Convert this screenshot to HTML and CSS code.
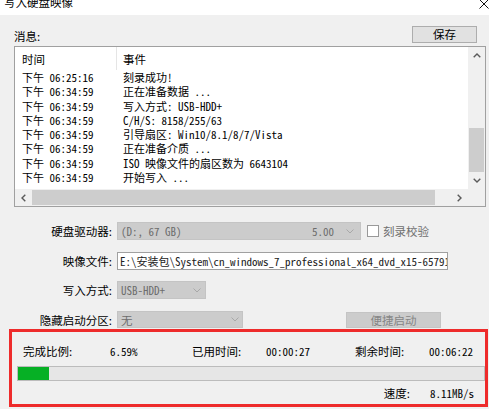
FILE: index.html
```html
<!DOCTYPE html>
<html lang="zh-CN">
<head>
<meta charset="utf-8">
<title>写入硬盘映像</title>
<link rel="stylesheet" href="styles.css">
</head>
<body>
<div class="titlebar">
  <div class="title">写入硬盘映像</div>
  <svg class="close" width="10" height="10" viewBox="0 0 10 10"><path d="M0.5 0.5 L9.5 9.5 M9.5 0.5 L0.5 9.5" stroke="#111" stroke-width="1" fill="none"/></svg>
</div>

<div class="msg-head">
  <div class="msg-label">消息:</div>
  <div class="btn-save">保存</div>
</div>

<div class="listbox">
  <div class="list-content">
    <div class="list-header">
      <div class="h1">时间</div>
      <div class="h2">事件</div>
    </div>
    <div class="row"><div class="c1">下午 06:25:16</div><div class="c2">刻录成功!</div></div>
    <div class="row"><div class="c1">下午 06:34:59</div><div class="c2">正在准备数据 ...</div></div>
    <div class="row"><div class="c1">下午 06:34:59</div><div class="c2">写入方式: USB-HDD+</div></div>
    <div class="row"><div class="c1">下午 06:34:59</div><div class="c2">C/H/S: 8158/255/63</div></div>
    <div class="row"><div class="c1">下午 06:34:59</div><div class="c2">引导扇区: Win10/8.1/8/7/Vista</div></div>
    <div class="row"><div class="c1">下午 06:34:59</div><div class="c2">正在准备介质 ...</div></div>
    <div class="row"><div class="c1">下午 06:34:59</div><div class="c2">ISO 映像文件的扇区数为 6643104</div></div>
    <div class="row"><div class="c1">下午 06:34:59</div><div class="c2">开始写入 ...</div></div>
  </div>
  <div class="vscroll">
    <div class="sbtn"><svg width="8" height="5" viewBox="0 0 8 5"><polyline points="0.7,4.3 4,1 7.3,4.3" stroke="#5a5a5a" stroke-width="1.4" fill="none"/></svg></div>
    <div class="vtrack"><div class="vthumb"></div></div>
    <div class="sbtn"><svg width="8" height="5" viewBox="0 0 8 5"><polyline points="0.7,0.7 4,4 7.3,0.7" stroke="#5a5a5a" stroke-width="1.4" fill="none"/></svg></div>
  </div>
  <div class="hscroll">
    <div class="sbtn"><svg width="5" height="8" viewBox="0 0 5 8"><polyline points="4.3,0.7 1,4 4.3,7.3" stroke="#5a5a5a" stroke-width="1.4" fill="none"/></svg></div>
    <div class="htrack"><div class="hthumb"></div></div>
    <div class="sbtn"><svg width="5" height="8" viewBox="0 0 5 8"><polyline points="0.7,0.7 4,4 0.7,7.3" stroke="#5a5a5a" stroke-width="1.4" fill="none"/></svg></div>
  </div>
  <div class="corner"></div>
</div>

<div class="form">
  <div class="frow">
    <div class="flabel">硬盘驱动器:</div>
    <div class="sel sel-drive">
      <span class="sel-text">(D:, 67 GB)</span>
      <span class="sel-extra">5.00</span>
      <svg class="chev" width="8" height="5" viewBox="0 0 8 5"><polyline points="0.5,0.5 4,4 7.5,0.5" stroke="#a8a8a8" stroke-width="1" fill="none"/></svg>
    </div>
    <div class="check"></div>
    <div class="check-label">刻录校验</div>
  </div>
  <div class="frow">
    <div class="flabel">映像文件:</div>
    <div class="input">E:\安装包\System\cn_windows_7_professional_x64_dvd_x15-65791.iso</div>
  </div>
  <div class="frow">
    <div class="flabel">写入方式:</div>
    <div class="sel sel-mode">
      <span class="sel-text">USB-HDD+</span>
      <svg class="chev" width="8" height="5" viewBox="0 0 8 5"><polyline points="0.5,0.5 4,4 7.5,0.5" stroke="#a8a8a8" stroke-width="1" fill="none"/></svg>
    </div>
  </div>
  <div class="frow">
    <div class="flabel">隐藏启动分区:</div>
    <div class="sel sel-hide">
      <span class="sel-text cjk">无</span>
      <svg class="chev" width="8" height="5" viewBox="0 0 8 5"><polyline points="0.5,0.5 4,4 7.5,0.5" stroke="#a8a8a8" stroke-width="1" fill="none"/></svg>
    </div>
    <div class="btn-quick">便捷启动</div>
  </div>
</div>

<div class="stats">
  <div>完成比例:</div>
  <div class="m">6.59%</div>
  <div>已用时间:</div>
  <div class="m">00:00:27</div>
  <div>剩余时间:</div>
  <div class="m">00:06:22</div>
</div>
<div class="bar"><div class="fill" style="width:6.59%"></div></div>
<div class="speed">
  <div>速度:</div>
  <div class="m">8.11MB/s</div>
</div>

<div class="annot"></div>
</body>
</html>
```

FILE: styles.css
```css
html, body {
  margin: 0;
  padding: 0;
}
body {
  width: 489px;
  height: 409px;
  overflow: hidden;
  position: relative;
  background: #f0f0f0;
  color: #000;
  font-family: "Noto Sans CJK SC", "Microsoft YaHei", sans-serif;
  font-size: 11.5px;
}

.titlebar {
  height: 15px;
  background: #fff;
  display: flex;
  justify-content: space-between;
  overflow: hidden;
}
.title {
  margin: -5px 0 0 4px;
  line-height: 14px;
  font-size: 11.5px;
}
.close {
  margin: -1px 0 0 0;
}

.msg-head {
  display: flex;
  justify-content: space-between;
  align-items: flex-end;
  margin: 11px 12px 3px 14px;
}
.msg-label {
  line-height: 14px;
}
.btn-save {
  width: 65px;
  height: 17px;
  box-sizing: border-box;
  border: 1px solid #adadad;
  background: #e1e1e1;
  text-align: center;
  line-height: 15px;
}

.listbox {
  margin: 0 3px 0 14px;
  height: 161px;
  box-sizing: border-box;
  border: 1px solid #a0a0a0;
  background: #fff;
  display: grid;
  grid-template-columns: 1fr 17px;
  grid-template-rows: 1fr 17px;
}
.list-content {
  overflow: hidden;
  font-family: "Noto Sans Mono CJK SC", "Noto Sans CJK SC", monospace;
  font-size: 11px;
}
.list-header {
  height: 23px;
  display: flex;
  align-items: stretch;
  font-family: "Noto Sans CJK SC", sans-serif;
  font-size: 11.5px;
}
.h1 {
  width: 102px;
  box-sizing: border-box;
  padding-left: 7px;
  border-right: 1px solid #e5e5e5;
  display: flex;
  align-items: center;
}
.h2 {
  padding-left: 6px;
  display: flex;
  align-items: center;
}
.row {
  display: flex;
  height: 14.3px;
  line-height: 14.3px;
  white-space: nowrap;
}
.c1 {
  width: 101px;
  box-sizing: border-box;
  padding-left: 7px;
}
.c2 {
  padding-left: 7px;
}

.vscroll {
  background: #f0f0f0;
  display: flex;
  flex-direction: column;
}
.sbtn {
  width: 17px;
  height: 17px;
  flex: none;
  display: flex;
  align-items: center;
  justify-content: center;
}
.vtrack {
  flex: 1;
  display: flex;
  flex-direction: column;
  justify-content: flex-end;
}
.vthumb {
  height: 44px;
  margin: 0 1px;
  background: #cdcdcd;
}
.hscroll {
  background: #f0f0f0;
  display: flex;
}
.htrack {
  flex: 1;
  display: flex;
}
.hthumb {
  width: 403px;
  margin: 1px 0;
  background: #cdcdcd;
}
.corner {
  background: #f0f0f0;
}

.form {
  margin-top: 15px;
  display: flex;
  flex-direction: column;
  gap: 11.5px;
}
.frow {
  display: flex;
  align-items: center;
  height: 18px;
}
.flabel {
  width: 112px;
  margin-right: 5px;
  text-align: right;
  line-height: 14px;
}
.sel {
  box-sizing: border-box;
  height: 18px;
  background: #cccccc;
  border: 1px solid #c4c4c4;
  display: flex;
  align-items: center;
  padding: 0 5px 0 3px;
  color: #6d6d6d;
  font-family: "Noto Sans Mono CJK SC", "Noto Sans CJK SC", monospace;
  font-size: 11px;
  line-height: 14px;
}
.sel-text {
  flex: 1;
  white-space: nowrap;
}
.sel-extra {
  margin-right: 12px;
}
.sel-drive {
  width: 244px;
  padding-right: 6px;
}
.sel-mode {
  width: 89px;
  padding-right: 4px;
}
.sel-hide {
  width: 126px;
  height: 17px;
  padding-right: 3px;
}
.cjk {
  font-family: "Noto Sans CJK SC", sans-serif;
  font-size: 11.5px;
}
.check {
  width: 12px;
  height: 12px;
  box-sizing: border-box;
  margin-left: 6px;
  border: 1px solid #999;
  background: #fff;
}
.check-label {
  margin-left: 4px;
  color: #6f6f6f;
  line-height: 14px;
}
.input {
  width: 331px;
  height: 18px;
  box-sizing: border-box;
  border: 1px solid #a0a0a0;
  background: #fff;
  padding-left: 2px;
  overflow: hidden;
  white-space: nowrap;
  font-family: "Noto Sans Mono CJK SC", "Noto Sans CJK SC", monospace;
  font-size: 11px;
  line-height: 16px;
  color: #222;
}
.btn-quick {
  margin-left: 103px;
  width: 95px;
  height: 16px;
  box-sizing: border-box;
  background: #cccccc;
  border: 1px solid #c4c4c4;
  color: #858585;
  text-align: center;
  line-height: 14px;
}

.m {
  font-family: "Noto Sans Mono CJK SC", "Liberation Mono", monospace;
  font-size: 11px;
}
.stats {
  margin-top: 15px;
  padding-left: 23px;
  display: grid;
  grid-template-columns: 87px 82px 74px 89px 74px auto;
  line-height: 14px;
}
.bar {
  margin: 8.5px 0 0 17px;
  width: 468px;
  height: 15px;
  box-sizing: border-box;
  border: 1px solid #bcbcbc;
  background: #e6e6e6;
}
.fill {
  height: 100%;
  background: #06b025;
}
.speed {
  margin-top: 5px;
  display: flex;
  justify-content: flex-end;
  gap: 20px;
  padding-right: 15px;
  line-height: 14px;
}

.annot {
  position: absolute;
  left: 9px;
  top: 329px;
  width: 479px;
  height: 78px;
  box-sizing: border-box;
  border: 3px solid #ee2b2b;
  pointer-events: none;
}
```
